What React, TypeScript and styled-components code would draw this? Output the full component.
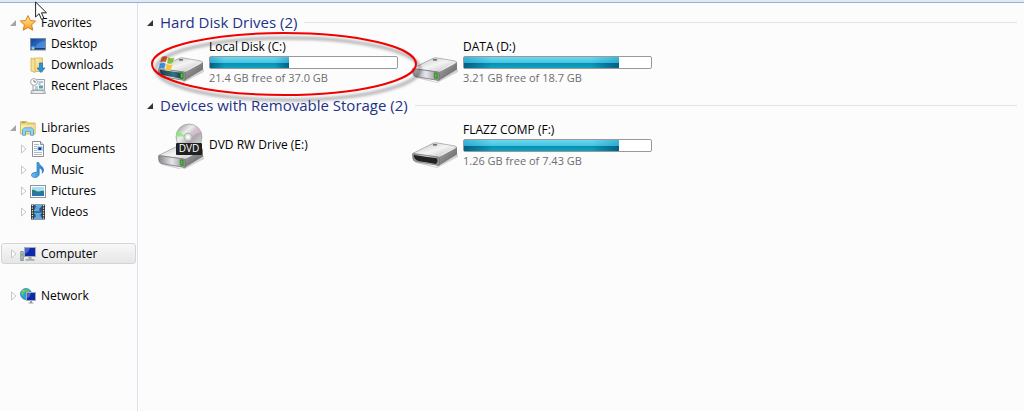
import React from "react";
import styled, { createGlobalStyle } from "styled-components";

const GlobalStyle = createGlobalStyle`
  *, *::before, *::after { box-sizing: border-box; }
  html, body, #root { height: 100%; }
  body {
    margin: 0;
    background: #fcfcfc;
    color: #000;
    font: 12px/16px "Open Sans", "Noto Sans", sans-serif;
  }
`;

const Page = styled.div`
  position: relative;
  display: flex;
  flex-direction: column;
  min-height: 100%;
  overflow: hidden;
`;

const TopEdge = styled.div`
  height: 3px;
  flex: none;
  background: #dfeaf7;
  border-bottom: 1px solid #9cb1ce;
`;

const Body = styled.div`
  display: flex;
  flex: 1;
`;

const Sidebar = styled.nav`
  flex: none;
  width: 138px;
  padding: 9px 1px 0;
  border-right: 1px solid #d9e3f0;
`;

const Group = styled.ul`
  list-style: none;
  margin: 0 0 21px;
  padding: 0;
`;

const Row = styled.a<{ $nested?: boolean; $selected?: boolean }>`
  display: flex;
  align-items: center;
  height: 21px;
  padding-left: ${(p) => (p.$nested ? 18 : 8)}px;
  color: #000;
  text-decoration: none;
  white-space: nowrap;
  border: 1px solid ${(p) => (p.$selected ? "#d5d5d5" : "transparent")};
  border-radius: 3px;
  background: ${(p) => (p.$selected ? "linear-gradient(#f8f8f8, #e6e6e6)" : "none")};
`;

const Spacer = styled.span`
  width: 10px;
`;

const IconBox = styled.svg`
  flex: none;
  margin-right: 5px;
`;

const Main = styled.main`
  flex: 1;
  min-width: 0;
  padding: 9px 7px 0 9px;
`;

const Section = styled.section`
  margin-bottom: 9px;
`;

const Heading = styled.h2`
  display: flex;
  align-items: center;
  gap: 7px;
  height: 21px;
  margin: 0 0 5px;
  color: #1e3287;
  font-size: 15px;
  line-height: 21px;
  font-weight: 400;
  white-space: nowrap;

  &::after {
    content: "";
    flex: 1;
    height: 1px;
    background: #e2e2e2;
  }
`;

const Tiles = styled.div`
  display: flex;
`;

const Tile = styled.article`
  position: relative;
  display: flex;
  align-items: center;
  gap: 4px;
  width: 254px;
  height: 48px;
  padding-left: 10px;
`;

const Details = styled.div`
  flex: none;
  width: 189px;
`;

const Name = styled.div`
  line-height: 18px;
  white-space: nowrap;
`;

const Free = styled.div`
  color: #6d6d6d;
  font-size: 11px;
  line-height: 17px;
  white-space: nowrap;
`;

const Meter = styled.div`
  height: 13px;
  border: 1px solid #999;
  border-radius: 2px;
  background: #fff;
`;

const Fill = styled.div`
  height: 100%;
  background:
    linear-gradient(90deg, rgba(0, 50, 80, 0.5), transparent 18%, transparent 82%, rgba(0, 50, 80, 0.5)) 0 100% / 100% 5px no-repeat,
    linear-gradient(90deg, rgba(0, 130, 180, 0.4), transparent 18%, transparent 82%, rgba(0, 130, 180, 0.4)),
    linear-gradient(#6cd8f0, #45c3e2 54%, #0590b0 55%, #12a3c0);
`;

const Highlight = styled.svg`
  position: absolute;
  left: 0;
  top: -11px;
  z-index: 1;
  overflow: visible;
  pointer-events: none;
`;

const Pointer = styled.svg`
  position: absolute;
  left: 35px;
  top: 1px;
`;

const Arrow = ({ open, dark }: { open?: boolean; dark?: boolean }) =>
  open ? (
    <svg width={dark ? 6 : 10} height="8" viewBox={dark ? "0 0 6 8" : "0 0 10 8"} aria-hidden="true">
      <path d="M6 1v6H0z" fill={dark ? "#333" : "#a5a5a5"} />
    </svg>
  ) : (
    <svg width="10" height="10" viewBox="0 0 10 10" aria-hidden="true">
      <path d="M1.500 1v8L6 5z" fill="#fff" stroke="#c6c6c6" />
    </svg>
  );

const art: Record<string, React.ReactNode> = {
  star: <path d="M8 .6l2.300 4.900 5.300.6-4 3.700 1.200 5.400L8 12.500l-4.800 2.700 1.200-5.400-4-3.700 5.300-.6z" fill="url(#gold)" stroke="#dd7d1c" strokeWidth="1" />,
  desktop: (
    <>
      <rect x=".5" y="2.500" width="15" height="11.500" fill="url(#screen)" stroke="#7b8ea8" />
      <path d="M5 12c2-5 6-7 10-7v7z" fill="#5d9be8" opacity=".5" />
      <path d="M1 12h14v1.500H1z" fill="#1b3c68" />
      <circle cx="3" cy="12" r="1.800" fill="#55c8ed" />
      <path d="M2.500 12h1.300v1.300H2.500z" fill="#ffd84a" />
    </>
  ),
  downloads: (
    <>
      <path d="M4 1h8.500v13.500H4z" fill="url(#folder)" stroke="#d6b057" strokeWidth=".8" />
      <path d="M1 1l4 1.500V15.500L1 14z" fill="#f7df93" stroke="#d6b057" strokeWidth=".8" />
      <path d="M9.500 6h3v5H15l-4 4.600L7 11h2.500z" fill="#2f91dc" stroke="#1b6fb9" strokeWidth=".7" />
    </>
  ),
  recent: (
    <>
      <path d="M6 1.500h8.500V12H3V7z" fill="#f4f7fa" stroke="#9aa5ae" />
      <path d="M8.500 4h4.500M8.500 6h2" stroke="#7790a5" />
      <path d="M9 7.500h4v3H9z" fill="#5d9fc0" />
      <path d="M5 9h3M5 11h3" stroke="#8da0ac" />
      <circle cx="4" cy="4" r="3.400" fill="#fff" stroke="#a3a9ae" />
      <path d="M4 2v2h2" fill="none" stroke="#6f777d" />
      <path d="M1.500 12.500h13l1 3H.8z" fill="#d5dadd" stroke="#929a9f" strokeWidth=".8" />
      <path d="M4 14h8" stroke="#fff" />
    </>
  ),
  libraries: (
    <>
      <path d="M.6 3V1.600h6l1 1.400h7.500V14H.6z" fill="#f1d676" stroke="#c8a851" strokeWidth=".8" />
      <path d="M2 2.500h3" stroke="#5fb45b" />
      <path d="M1 5h14v8.500H1z" fill="url(#folder)" />
      <path d="M2.500 15.300V9.800l2-2h7l2 2v5.500h-3v-4h-5v4z" fill="#8fd3f2" stroke="#4a9fcb" strokeWidth=".8" />
    </>
  ),
  documents: (
    <>
      <path d="M2.500.5h8l3 3v12h-11z" fill="#fff" stroke="#8a8f96" />
      <path d="M10.500.5v3h3" fill="#dfe3e8" stroke="#8a8f96" />
      <path d="M4 3.500h5M4 5.500h3M4 7.500h3M4 9.500h3M4 11.500h8M4 13.500h8" stroke="#b0b8c4" />
      <path d="M7.500 5.500h5v4h-5z" fill="#68b0e8" />
      <path d="M8.500 6.500h2.500v2.500H8.500z" fill="#123c88" />
    </>
  ),
  music: (
    <path d="M7 .5h1.700c.5 3 4.800 3.800 4.800 7.500 0 1.300-.5 2.400-1.300 3.200.8-2.800-.5-4.600-3-5.400V12c0 2-2 3.500-4.300 3.500-2 0-3.400-1-3.400-2.400C1.500 11.300 4 10 7 10.400z" fill="url(#note)" stroke="#2476ba" strokeWidth=".7" />
  ),
  pictures: (
    <>
      <rect x=".5" y="2.500" width="15" height="12" fill="#fff" stroke="#8f9499" />
      <path d="M2 4h12v9H2z" fill="#a8dff8" />
      <path d="M2 7c3-1 4 2 7 1.500 2-.4 3-1 5-.5v3H2z" fill="#2a8069" />
      <path d="M2 10.500c4-1 8-1 12 0V13H2z" fill="#2875b6" />
    </>
  ),
  videos: (
    <>
      <path d="M1 .5h14v15H1z" fill="#303437" />
      <path d="M2.500 1v14M13.500 1v14" stroke="#e5e7e8" strokeWidth="1.300" strokeDasharray="1.300 1.200" />
      <path d="M4 1h8v6.500H4zM4 8.500h8V15H4z" fill="#4fb0ea" />
      <path d="M4 1l2 1-1 3-1 1zM12 2l-3 3 1 2.500h2zM4 9l2 3-2 2zM12 9l-2 2 2 3z" fill="#284f93" />
      <path d="M7 3l2 1-2 1.500zM9 10l2 2-2 1z" fill="#cf7460" />
    </>
  ),
  computer: (
    <>
      <path d="M.7 5.500h2.600v9H.7z" fill="#b4bbb9" stroke="#747c79" strokeWidth=".7" />
      <path d="M1.300 8h1.300v1.500H1.300z" fill="#46bd45" />
      <rect x="4.500" y="1.500" width="11" height="9" fill="#0e29a8" stroke="#a4acb5" />
      <path d="M5 2h5l-2 4-3 2z" fill="#5578e8" opacity=".75" />
      <path d="M8.500 11h3v2h-3zM6 13h8l1 1.700H5z" fill="#a6adb2" />
    </>
  ),
  network: (
    <>
      <circle cx="6" cy="6" r="5.500" fill="#2aa0d8" stroke="#2175b1" strokeWidth=".7" />
      <path d="M2 2.500L6 1l1 2-3 2-1 3-2-2zM7 1l3 2-2 2-2-2z" fill="#63c65b" />
      <path d="M1.500 3.500L5 1.500 3.500 3z" fill="#d8f2dd" />
      <rect x="6.500" y="4.500" width="9" height="8" fill="#0e29a8" stroke="#a4acb5" />
      <path d="M7 5h4l-1.500 4L7 10z" fill="#4d73e6" opacity=".8" />
      <path d="M10 13h2v1.500h-2zM8.500 14.500h5v1h-5z" fill="#969ea5" />
    </>
  ),
};

const SmallIcon = ({ name }: { name: string }) => (
  <IconBox width="16" height="16" viewBox="0 0 16 16" aria-hidden="true">{art[name]}</IconBox>
);

const DefsHolder = styled.svg`
  position: absolute;
`;

const Defs = () => (
  <DefsHolder width="0" height="0" aria-hidden="true">
    <defs>
      <linearGradient id="gold" x2="0" y2="1"><stop stopColor="#fff0a0" /><stop offset="1" stopColor="#f59a1a" /></linearGradient>
      <linearGradient id="screen" x2="1" y2="1"><stop stopColor="#123f99" /><stop offset="1" stopColor="#4a8de0" /></linearGradient>
      <linearGradient id="folder" x2="1" y2="1"><stop stopColor="#fdf0b8" /><stop offset="1" stopColor="#ecca6c" /></linearGradient>
      <linearGradient id="note" x2="1"><stop stopColor="#6ac4f2" /><stop offset="1" stopColor="#2079c4" /></linearGradient>
      <linearGradient id="lid" x2="1" y2="1"><stop stopColor="#bdbdbd" /><stop offset=".5" stopColor="#f4f4f4" /><stop offset="1" stopColor="#b5b5b5" /></linearGradient>
      <linearGradient id="face" x2="1"><stop stopColor="#858585" /><stop offset=".5" stopColor="#e6e6ee" /><stop offset="1" stopColor="#858585" /></linearGradient>
      <linearGradient id="side" x2="1" y2="1"><stop stopColor="#a8a8a8" /><stop offset="1" stopColor="#5c5c5c" /></linearGradient>
      <linearGradient id="teal" x2="1"><stop stopColor="#1d3c48" /><stop offset=".6" stopColor="#2f7580" /><stop offset="1" stopColor="#1d3037" /></linearGradient>
      <linearGradient id="disc" x2="1" y2="1"><stop stopColor="#8a8a8a" /><stop offset=".35" stopColor="#eee" /><stop offset=".6" stopColor="#aaa" /><stop offset="1" stopColor="#e6e6e6" /></linearGradient>
      <filter id="soft" x="-10%" y="-20%" width="120%" height="150%"><feGaussianBlur stdDeviation="1.500" /></filter>
    </defs>
  </DefsHolder>
);

type DriveKind = "system" | "disk" | "dvd" | "usb";

const drops: Record<DriveKind, number> = { system: 3, disk: 3, dvd: 7, usb: 5 };

const DriveIcon = ({ kind }: { kind: DriveKind }) => (
  <svg width="48" height="48" viewBox="0 0 48 48" aria-hidden="true">
    <g transform={`translate(0 ${drops[kind]})`}>
      <path d="M3 34l22 7 22-13v3L26 42 5 37z" fill="#000" opacity=".16" />
      <path d="M1.500 27.500L22 17.300q2-.8 4-.4L44 20q2.500.6 1.500 2.500L28 31.500z" fill="url(#lid)" stroke="#999" strokeWidth=".7" />
      <path d="M27.500 31.500L46 21.500v7L28 39.500z" fill="url(#side)" />
      <path d="M1.500 28.500q0-1 1.500-.8L27 31q1.500.3 1.500 1.700v5.500q0 1.500-1.500 1.200L4.500 35.500q-2-.5-2.500-2.500z" fill="url(#face)" stroke="#777" strokeWidth=".8" />
      {kind === "system" && <path d="M3 28.800l23 3.300v5.800L5 34q-2-1-2-5.200z" fill="url(#teal)" />}
      {kind === "usb" ? (
        <path d="M2.800 29l23 3.200q1.800 3-1 5.800L8 35.200Q2.500 33.500 2.800 29z" fill="#222" />
      ) : (
        <path d="M23.300 31.800l2.700.4v5.200l-2.700-.5z" fill="#3fd02c" stroke="#19631a" strokeWidth=".6" />
      )}
      <ellipse cx="24" cy="18.800" rx="2.400" ry=".9" fill="#666" />
      <path d="M30 29.500l13-7" stroke="#fff" strokeWidth=".8" opacity=".7" />
    </g>
    {kind === "system" && (
      <g transform="translate(1 4)" stroke="#fff" strokeWidth=".3">
        <path d="M3.500 15q3-2 6-.3L8 20.500q-3-1.600-6 0z" fill="#e8622a" />
        <path d="M10.300 15.200q3 1.800 6.200.2L15 21q-3 1.700-6.200 0z" fill="#86bd3a" />
        <path d="M1.800 21.400q3-1.600 6 0l-1.500 5.800q-3-1.700-6 0z" fill="#3b8fd8" />
        <path d="M8.600 21.800q3 1.700 6.200.2l-1.600 5.800q-3 1.600-6 0z" fill="#f8c33a" />
      </g>
    )}
    {kind === "dvd" && (
      <g>
        <circle cx="32" cy="16" r="13" fill="url(#disc)" stroke="#999" strokeWidth=".7" />
        <path d="M31 16L20 10l-1 5z" fill="#80ed70" opacity=".8" />
        <path d="M31 16L42 7l2 4z" fill="#f0b5dc" opacity=".7" />
        <circle cx="31" cy="16" r="4" fill="#ddd" stroke="#aaa" strokeWidth=".8" />
        <circle cx="31" cy="16" r="1.700" fill="#fff" />
        <rect x="19" y="22" width="26" height="12" rx="1" fill="#202020" />
        <text x="32" y="31" textAnchor="middle" fill="#fff" fontFamily="Open Sans, sans-serif" fontSize="10">DVD</text>
      </g>
    )}
  </svg>
);

interface Item { label: string; icon: string; arrow?: boolean; open?: boolean; nested?: boolean; selected?: boolean }

const groups: Item[][] = [
  [
    { label: "Favorites", icon: "star", arrow: true, open: true },
    { label: "Desktop", icon: "desktop", nested: true },
    { label: "Downloads", icon: "downloads", nested: true },
    { label: "Recent Places", icon: "recent", nested: true },
  ],
  [
    { label: "Libraries", icon: "libraries", arrow: true, open: true },
    { label: "Documents", icon: "documents", arrow: true, nested: true },
    { label: "Music", icon: "music", arrow: true, nested: true },
    { label: "Pictures", icon: "pictures", arrow: true, nested: true },
    { label: "Videos", icon: "videos", arrow: true, nested: true },
  ],
  [{ label: "Computer", icon: "computer", arrow: true, selected: true }],
  [{ label: "Network", icon: "network", arrow: true }],
];

interface Drive { name: string; kind: DriveKind; free?: string; used?: number; marked?: boolean }

const sections: { title: string; drives: Drive[] }[] = [
  {
    title: "Hard Disk Drives (2)",
    drives: [
      { name: "Local Disk (C:)", kind: "system", free: "21.4 GB free of 37.0 GB", used: 42, marked: true },
      { name: "DATA (D:)", kind: "disk", free: "3.21 GB free of 18.7 GB", used: 83 },
    ],
  },
  {
    title: "Devices with Removable Storage (2)",
    drives: [
      { name: "DVD RW Drive (E:)", kind: "dvd" },
      { name: "FLAZZ COMP (F:)", kind: "usb", free: "1.26 GB free of 7.43 GB", used: 83 },
    ],
  },
];

export default function App() {
  return (
    <Page>
      <GlobalStyle />
      <Defs />
      <TopEdge />
      <Body>
        <Sidebar>
          {groups.map((items) => (
            <Group key={items[0].label}>
              {items.map((item) => (
                <li key={item.label}>
                  <Row href="#" $nested={item.nested} $selected={item.selected}>
                    {item.arrow ? <Arrow open={item.open} /> : <Spacer />}
                    <SmallIcon name={item.icon} />
                    {item.label}
                  </Row>
                </li>
              ))}
            </Group>
          ))}
        </Sidebar>
        <Main>
          {sections.map((section) => (
            <Section key={section.title}>
              <Heading><Arrow open dark />{section.title}</Heading>
              <Tiles>
                {section.drives.map((drive) => (
                  <Tile key={drive.name}>
                    <DriveIcon kind={drive.kind} />
                    <Details>
                      <Name>{drive.name}</Name>
                      {drive.free && (
                        <>
                          <Meter role="meter" aria-label={`${drive.name} used space`} aria-valuenow={drive.used}>
                            <Fill style={{ width: `${drive.used}%` }} />
                          </Meter>
                          <Free>{drive.free}</Free>
                        </>
                      )}
                    </Details>
                    {drive.marked && (
                      <Highlight width="276" height="80" viewBox="0 0 276 80" aria-hidden="true">
                        <ellipse cx="141" cy="42" rx="132" ry="31" fill="none" stroke="#000" strokeWidth="3" opacity=".3" filter="url(#soft)" />
                        <ellipse cx="137" cy="37" rx="132" ry="31" fill="none" stroke="#f00000" strokeWidth="2" />
                      </Highlight>
                    )}
                  </Tile>
                ))}
              </Tiles>
            </Section>
          ))}
        </Main>
      </Body>
      <Pointer width="13" height="20" viewBox="0 0 13 20" aria-hidden="true">
        <path d="M.6 1v15l3.500-3.300 2.400 5.700 2.400-1-2.400-5.600h5z" fill="#fff" stroke="#222" strokeWidth="1" />
      </Pointer>
    </Page>
  );
}
